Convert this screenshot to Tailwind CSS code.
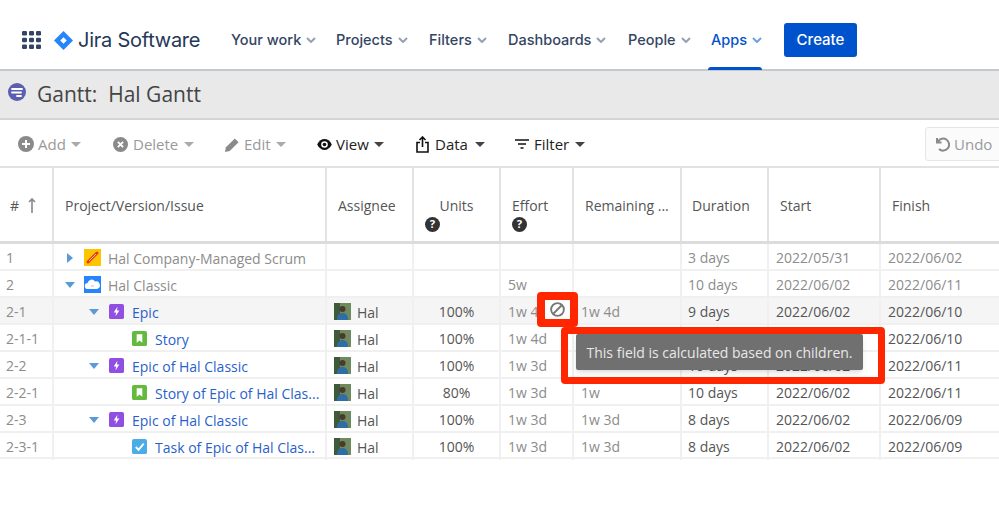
<!DOCTYPE html>
<html lang="en">

<head>
    <meta charset="UTF-8">
    <title>Gantt: Hal Gantt</title>
    <script src="https://cdn.jsdelivr.net/npm/@tailwindcss/browser@4"></script>
</head>

<body class="bg-white overflow-hidden font-['Open_Sans',sans-serif]">
    <div class="relative w-[999px] h-[517px] overflow-hidden">
        <!-- top nav -->
        <nav class="h-[71px] pt-[11px] border-b-2 border-[#c4c8cf] flex items-center font-['Inter',sans-serif] text-[#344563] text-[14.5px] font-medium">
            <svg class="ml-[22px] w-[19px] h-[18px]" viewBox="0 0 19 18" fill="#344563">
                <rect x="0" y="0" width="5" height="4.5" rx="1.2" /><rect x="7" y="0" width="5" height="4.5" rx="1.2" /><rect x="14" y="0" width="5" height="4.5" rx="1.2" />
                <rect x="0" y="6.7" width="5" height="4.5" rx="1.2" /><rect x="7" y="6.7" width="5" height="4.5" rx="1.2" /><rect x="14" y="6.7" width="5" height="4.5" rx="1.2" />
                <rect x="0" y="13.4" width="5" height="4.5" rx="1.2" /><rect x="7" y="13.4" width="5" height="4.5" rx="1.2" /><rect x="14" y="13.4" width="5" height="4.5" rx="1.2" />
            </svg>
            <svg class="ml-[13px] w-[19px] h-[19px]" viewBox="0 0 20 20">
                <path d="M10 0 20 10 10 20 0 10Z" fill="#2684ff" />
                <path d="M10 6.6 13.4 10 10 13.4 6.6 10Z" fill="#fff" />
            </svg>
            <span class="ml-[5px] w-[146px] text-[20px] font-normal tracking-[-0.25px] text-[#253858] whitespace-nowrap">Jira Software</span>
            <div class="ml-[7px] flex items-center w-[105px] gap-[5px]">Your work
                <svg class="w-[10px] h-[6px]" viewBox="0 0 10 6" fill="none" stroke="#97a0af" stroke-width="2"><path d="M1 1l4 4 4-4" /></svg>
            </div>
            <div class="flex items-center w-[93px] gap-[5px]">Projects
                <svg class="w-[10px] h-[6px]" viewBox="0 0 10 6" fill="none" stroke="#97a0af" stroke-width="2"><path d="M1 1l4 4 4-4" /></svg>
            </div>
            <div class="flex items-center w-[79px] gap-[5px]">Filters
                <svg class="w-[10px] h-[6px]" viewBox="0 0 10 6" fill="none" stroke="#97a0af" stroke-width="2"><path d="M1 1l4 4 4-4" /></svg>
            </div>
            <div class="flex items-center w-[120px] gap-[5px]">Dashboards
                <svg class="w-[10px] h-[6px]" viewBox="0 0 10 6" fill="none" stroke="#97a0af" stroke-width="2"><path d="M1 1l4 4 4-4" /></svg>
            </div>
            <div class="flex items-center w-[83px] gap-[5px]">People
                <svg class="w-[10px] h-[6px]" viewBox="0 0 10 6" fill="none" stroke="#97a0af" stroke-width="2"><path d="M1 1l4 4 4-4" /></svg>
            </div>
            <div class="relative flex items-center w-[73px] gap-[5px] text-[#0052cc]">Apps
                <svg class="w-[10px] h-[6px]" viewBox="0 0 10 6" fill="none" stroke="#6f9fe6" stroke-width="2"><path d="M1 1l4 4 4-4" /></svg>
                <span class="absolute left-[-3px] top-[38px] w-[54px] h-[3px] rounded-t-sm bg-[#0052cc]"></span>
            </div>
            <button class="w-[73px] h-[34px] rounded-[3px] bg-[#0052cc] text-white text-[15px] font-medium">Create</button>
        </nav>

        <!-- title bar -->
        <div class="h-[49px] pt-[1px] bg-[#e9e9e9] border-b-2 border-[#d4d4d4] flex items-center">
            <svg class="ml-[8px] mb-[6px] w-[18px] h-[18px]" viewBox="0 0 18 18">
                <circle cx="9" cy="9" r="9" fill="#5a5fb0" />
                <path d="M4 6h10M4 9.500h9M9 13h4" stroke="#fff" stroke-width="1.800" stroke-linecap="round" fill="none" />
            </svg>
            <span class="ml-[11px] text-[21px] text-[#444] whitespace-pre">Gantt:  Hal Gantt</span>
        </div>

        <!-- toolbar -->
        <div class="h-[48px] pt-[2px] border-b-2 border-[#e2e2e2] flex items-center text-[15px] text-[#9a9a9a] *:shrink-0">
            <div class="ml-[18px] w-[95px] flex items-center gap-[4px]">
                <svg class="w-[16px] h-[16px]" viewBox="0 0 16 16"><circle cx="8" cy="8" r="8" fill="#8a8a8a" /><path d="M8 4v8M4 8h8" stroke="#fff" stroke-width="2" /></svg>Add
                <span class="ml-[1px] border-x-[5px] border-x-transparent border-t-[5px] border-t-[#aaa]"></span>
            </div>
            <div class="w-[112px] flex items-center gap-[5px]">
                <svg class="w-[15px] h-[15px]" viewBox="0 0 16 16"><circle cx="8" cy="8" r="8" fill="#8a8a8a" /><path d="M5.200 5.200l5.600 5.600M10.800 5.200l-5.600 5.600" stroke="#fff" stroke-width="2" /></svg>Delete
                <span class="ml-[1px] border-x-[5px] border-x-transparent border-t-[5px] border-t-[#aaa]"></span>
            </div>
            <div class="w-[92px] flex items-center gap-[4px]">
                <svg class="w-[15px] h-[15px]" viewBox="0 0 16 16" fill="#8a8a8a"><path d="M0 16l1-5L10.500 1.500l4 4L5 15z" /></svg>Edit
                <span class="ml-[1px] border-x-[5px] border-x-transparent border-t-[5px] border-t-[#aaa]"></span>
            </div>
            <div class="w-[99px] flex items-center gap-[4px] text-[#222]">
                <svg class="w-[15px] h-[11px]" viewBox="0 0 16 12"><path d="M0 6c2-4 5-6 8-6s6 2 8 6c-2 4-5 6-8 6S2 10 0 6z" fill="#111" /><circle cx="8" cy="6" r="3.600" fill="#fff" /><circle cx="8" cy="6" r="2" fill="#111" /></svg>View
                <span class="ml-[1px] border-x-[5px] border-x-transparent border-t-[5px] border-t-[#444]"></span>
            </div>
            <div class="w-[99px] flex items-center gap-[6px] text-[#222]">
                <svg class="w-[13px] h-[17px]" viewBox="0 0 13 17" fill="none" stroke="#111" stroke-width="1.600"><path d="M4 6.500H1v9.500h11V6.500H9M6.500 11V1M3.500 4l3-3 3 3" /></svg>Data
                <span class="ml-[1px] border-x-[5px] border-x-transparent border-t-[5px] border-t-[#444]"></span>
            </div>
            <div class="w-[410px] flex items-center gap-[5px] text-[#222]">
                <svg class="w-[14px] h-[10px]" viewBox="0 0 14 10" fill="none" stroke="#111" stroke-width="1.500"><path d="M0 1h14M3 5h8M5.500 9h3" /></svg>Filter
                <span class="ml-[1px] border-x-[5px] border-x-transparent border-t-[5px] border-t-[#444]"></span>
            </div>
            <div class="w-[90px] h-[34px] border border-[#e6e6e6] rounded-[3px] bg-[#fbfbfb] flex items-center pl-[9px] gap-[3px]">
                <svg class="w-[16px] h-[15px]" viewBox="0 0 16 15" fill="none" stroke="#8a8a8a" stroke-width="2"><path d="M3 4.500A6 6 0 1 1 4 12M2 1v4.500h4.500" /></svg>Undo
            </div>
        </div>

        <!-- table header -->
        <div class="h-[76px] border-b-[3px] border-[#dcdcdc] grid grid-cols-[54px_273px_87px_87px_73px_108px_87px_112px_118px] text-[14px] text-[#555] *:border-r-2 *:border-[#e2e2e2] *:flex *:flex-col *:justify-center">
            <div class="pl-[10px] pt-[2px]"><span class="flex items-center gap-[9px]"># <svg class="w-[8px] h-[15px]" viewBox="0 0 8 15" fill="none" stroke="#888" stroke-width="1.600"><path d="M4 15V1M1 4l3-3 3 3" /></svg></span></div>
            <div class="pl-[11px] pt-[2px]">Project/Version/Issue</div>
            <div class="pl-[11px] pt-[2px]">Assignee</div>
            <div class="pl-[11px]"><span class="-ml-[11px] text-center mt-[17px]">Units</span>
                <svg class="mt-[1px] w-[15px] h-[15px]" viewBox="0 0 16 16"><circle cx="8" cy="8" r="8" fill="#333" /><text x="8" y="12.200" text-anchor="middle" font-size="12" font-weight="700" fill="#fff" font-family="Open Sans">?</text></svg>
            </div>
            <div class="pl-[11px]"><span class="mt-[17px]">Effort</span>
                <svg class="mt-[1px] w-[15px] h-[15px]" viewBox="0 0 16 16"><circle cx="8" cy="8" r="8" fill="#333" /><text x="8" y="12.200" text-anchor="middle" font-size="12" font-weight="700" fill="#fff" font-family="Open Sans">?</text></svg>
            </div>
            <div class="pl-[11px] pt-[2px] whitespace-nowrap">Remaining ...</div>
            <div class="pl-[10px] pt-[2px]">Duration</div>
            <div class="pl-[11px] pt-[2px]">Start</div>
            <div class="pl-[11px] pt-[2px] border-r-0!">Finish</div>
        </div>

        <!-- rows -->
        <div class="text-[14px] text-[#8c8c8c] *:h-[27px] *:border-b-2 *:border-[#f0f0f0] *:grid *:grid-cols-[54px_273px_87px_87px_73px_108px_87px_112px_118px] *:items-stretch">
            <div>
                <div class="pl-[6px] border-r-2 border-[#f0f0f0] leading-[27px]">1</div>
                <div class="flex items-center border-r-2 border-[#f0f0f0]">
                    <span class="ml-[13px] border-y-[5px] border-y-transparent border-l-[6px] border-l-[#5b9bd5]"></span>
                    <svg class="ml-[11px] w-[17px] h-[17px]" viewBox="0 0 17 17"><rect width="17" height="17" fill="#ffc400" /><path d="M4 13L13 4" stroke="#e5391c" stroke-width="3" stroke-linecap="round" /><path d="M5 12l7-7" stroke="#ffd9cf" stroke-width=".8" /></svg>
                    <span class="ml-[7px] mt-[1px] whitespace-nowrap">Hal Company-Managed Scrum</span>
                </div>
                <div class="border-r-2 border-[#f0f0f0]"></div>
                <div class="border-r-2 border-[#f0f0f0]"></div>
                <div class="border-r-2 border-[#f0f0f0]"></div>
                <div class="border-r-2 border-[#f0f0f0]"></div>
                <div class="pl-[6px] border-r-2 border-[#f0f0f0] leading-[27px]">3 days</div>
                <div class="pl-[7px] border-r-2 border-[#f0f0f0] leading-[27px]">2022/05/31</div>
                <div class="pl-[7px] leading-[27px]">2022/06/02</div>
            </div>
            <div>
                <div class="pl-[6px] border-r-2 border-[#f0f0f0] leading-[27px]">2</div>
                <div class="flex items-center border-r-2 border-[#f0f0f0]">
                    <span class="ml-[11px] border-x-[5px] border-x-transparent border-t-[6px] border-t-[#5b9bd5]"></span>
                    <svg class="ml-[9px] w-[17px] h-[17px]" viewBox="0 0 17 17"><rect width="17" height="17" fill="#2684ff" /><path d="M4 13a3 3 0 0 1-.4-6A4 4 0 0 1 11 5.500a3.800 3.800 0 0 1 2 7.500z" fill="#fff" /><path d="M7 9.500c.8 1 2.200 1 3 0" stroke="#e88" stroke-width=".8" fill="none" /></svg>
                    <span class="ml-[7px] mt-[1px] whitespace-nowrap">Hal Classic</span>
                </div>
                <div class="border-r-2 border-[#f0f0f0]"></div>
                <div class="border-r-2 border-[#f0f0f0]"></div>
                <div class="pl-[7px] border-r-2 border-[#f0f0f0] leading-[27px]">5w</div>
                <div class="border-r-2 border-[#f0f0f0]"></div>
                <div class="pl-[6px] border-r-2 border-[#f0f0f0] leading-[27px]">10 days</div>
                <div class="pl-[7px] border-r-2 border-[#f0f0f0] leading-[27px]">2022/06/02</div>
                <div class="pl-[7px] leading-[27px]">2022/06/11</div>
            </div>
            <div class="bg-[#f5f5f5]">
                <div class="pl-[6px] border-r-2 border-[#f0f0f0] leading-[27px]">2-1</div>
                <div class="flex items-center border-r-2 border-[#f0f0f0]">
                    <span class="ml-[35px] border-x-[5px] border-x-transparent border-t-[6px] border-t-[#5b9bd5]"></span>
                    <svg class="ml-[10px] w-[15px] h-[15px]" viewBox="0 0 16 16"><rect width="16" height="16" rx="2" fill="#904ee2" /><path d="M9 3L5 9h2.500L7 13l4-6H8.500z" fill="#fff" /></svg>
                    <span class="ml-[8px] mt-[1px] text-[#2a5fcb] whitespace-nowrap">Epic</span>
                </div>
                <div class="flex items-center pl-[7px] gap-[6px] border-r-2 border-[#f0f0f0] text-[#555]">
                    <svg class="w-[17px] h-[17px]" viewBox="0 0 17 17"><rect width="17" height="17" fill="#6f8a5e" /><rect width="6" height="17" fill="#3f5a3a" /><circle cx="8.500" cy="6" r="3" fill="#4a3a2c" /><path d="M3 17c0-5 2-7 5.500-7s5.500 2 5.500 7z" fill="#2f6ea5" /></svg><span class="mt-[1px]">Hal</span>
                </div>
                <div class="text-center border-r-2 border-[#f0f0f0] leading-[27px] text-[#555]">100%</div>
                <div class="pl-[7px] border-r-2 border-[#f0f0f0] leading-[27px]">1w 4d</div>
                <div class="pl-[7px] border-r-2 border-[#f0f0f0] leading-[27px]">1w 4d</div>
                <div class="pl-[6px] border-r-2 border-[#f0f0f0] leading-[27px] text-[#555]">9 days</div>
                <div class="pl-[7px] border-r-2 border-[#f0f0f0] leading-[27px] text-[#555]">2022/06/02</div>
                <div class="pl-[7px] leading-[27px] text-[#555]">2022/06/10</div>
            </div>
            <div>
                <div class="pl-[6px] border-r-2 border-[#f0f0f0] leading-[27px]">2-1-1</div>
                <div class="flex items-center border-r-2 border-[#f0f0f0]">
                    <svg class="ml-[78px] w-[15px] h-[15px]" viewBox="0 0 16 16"><rect width="16" height="16" rx="2" fill="#63ba3c" /><path d="M5 3.500h6v9l-3-2.500-3 2.500z" fill="#fff" /></svg>
                    <span class="ml-[8px] mt-[1px] text-[#2a5fcb] whitespace-nowrap">Story</span>
                </div>
                <div class="flex items-center pl-[7px] gap-[6px] border-r-2 border-[#f0f0f0] text-[#555]">
                    <svg class="w-[17px] h-[17px]" viewBox="0 0 17 17"><rect width="17" height="17" fill="#6f8a5e" /><rect width="6" height="17" fill="#3f5a3a" /><circle cx="8.500" cy="6" r="3" fill="#4a3a2c" /><path d="M3 17c0-5 2-7 5.500-7s5.500 2 5.500 7z" fill="#2f6ea5" /></svg><span class="mt-[1px]">Hal</span>
                </div>
                <div class="text-center border-r-2 border-[#f0f0f0] leading-[27px] text-[#555]">100%</div>
                <div class="pl-[7px] border-r-2 border-[#f0f0f0] leading-[27px]">1w 4d</div>
                <div class="border-r-2 border-[#f0f0f0]"></div>
                <div class="border-r-2 border-[#f0f0f0]"></div>
                <div class="border-r-2 border-[#f0f0f0]"></div>
                <div class="pl-[7px] leading-[27px] text-[#555]">2022/06/10</div>
            </div>
            <div>
                <div class="pl-[6px] border-r-2 border-[#f0f0f0] leading-[27px]">2-2</div>
                <div class="flex items-center border-r-2 border-[#f0f0f0]">
                    <span class="ml-[35px] border-x-[5px] border-x-transparent border-t-[6px] border-t-[#5b9bd5]"></span>
                    <svg class="ml-[10px] w-[15px] h-[15px]" viewBox="0 0 16 16"><rect width="16" height="16" rx="2" fill="#904ee2" /><path d="M9 3L5 9h2.500L7 13l4-6H8.500z" fill="#fff" /></svg>
                    <span class="ml-[8px] mt-[1px] text-[#2a5fcb] whitespace-nowrap">Epic of Hal Classic</span>
                </div>
                <div class="flex items-center pl-[7px] gap-[6px] border-r-2 border-[#f0f0f0] text-[#555]">
                    <svg class="w-[17px] h-[17px]" viewBox="0 0 17 17"><rect width="17" height="17" fill="#6f8a5e" /><rect width="6" height="17" fill="#3f5a3a" /><circle cx="8.500" cy="6" r="3" fill="#4a3a2c" /><path d="M3 17c0-5 2-7 5.500-7s5.500 2 5.500 7z" fill="#2f6ea5" /></svg><span class="mt-[1px]">Hal</span>
                </div>
                <div class="text-center border-r-2 border-[#f0f0f0] leading-[27px] text-[#555]">100%</div>
                <div class="pl-[7px] border-r-2 border-[#f0f0f0] leading-[27px]">1w 3d</div>
                <div class="border-r-2 border-[#f0f0f0]"></div>
                <div class="pl-[6px] border-r-2 border-[#f0f0f0] leading-[27px] text-[#555]">10 days</div>
                <div class="pl-[7px] border-r-2 border-[#f0f0f0] leading-[27px] text-[#555]">2022/06/02</div>
                <div class="pl-[7px] leading-[27px] text-[#555]">2022/06/11</div>
            </div>
            <div>
                <div class="pl-[6px] border-r-2 border-[#f0f0f0] leading-[27px]">2-2-1</div>
                <div class="flex items-center border-r-2 border-[#f0f0f0]">
                    <svg class="ml-[78px] w-[15px] h-[15px]" viewBox="0 0 16 16"><rect width="16" height="16" rx="2" fill="#63ba3c" /><path d="M5 3.500h6v9l-3-2.500-3 2.500z" fill="#fff" /></svg>
                    <span class="ml-[8px] mt-[1px] text-[#2a5fcb] whitespace-nowrap">Story of Epic of Hal Clas...</span>
                </div>
                <div class="flex items-center pl-[7px] gap-[6px] border-r-2 border-[#f0f0f0] text-[#555]">
                    <svg class="w-[17px] h-[17px]" viewBox="0 0 17 17"><rect width="17" height="17" fill="#6f8a5e" /><rect width="6" height="17" fill="#3f5a3a" /><circle cx="8.500" cy="6" r="3" fill="#4a3a2c" /><path d="M3 17c0-5 2-7 5.500-7s5.500 2 5.500 7z" fill="#2f6ea5" /></svg><span class="mt-[1px]">Hal</span>
                </div>
                <div class="text-center border-r-2 border-[#f0f0f0] leading-[27px] text-[#555]">80%</div>
                <div class="pl-[7px] border-r-2 border-[#f0f0f0] leading-[27px]">1w 3d</div>
                <div class="pl-[7px] border-r-2 border-[#f0f0f0] leading-[27px]">1w</div>
                <div class="pl-[6px] border-r-2 border-[#f0f0f0] leading-[27px] text-[#555]">10 days</div>
                <div class="pl-[7px] border-r-2 border-[#f0f0f0] leading-[27px] text-[#555]">2022/06/02</div>
                <div class="pl-[7px] leading-[27px] text-[#555]">2022/06/11</div>
            </div>
            <div>
                <div class="pl-[6px] border-r-2 border-[#f0f0f0] leading-[27px]">2-3</div>
                <div class="flex items-center border-r-2 border-[#f0f0f0]">
                    <span class="ml-[35px] border-x-[5px] border-x-transparent border-t-[6px] border-t-[#5b9bd5]"></span>
                    <svg class="ml-[10px] w-[15px] h-[15px]" viewBox="0 0 16 16"><rect width="16" height="16" rx="2" fill="#904ee2" /><path d="M9 3L5 9h2.500L7 13l4-6H8.500z" fill="#fff" /></svg>
                    <span class="ml-[8px] mt-[1px] text-[#2a5fcb] whitespace-nowrap">Epic of Hal Classic</span>
                </div>
                <div class="flex items-center pl-[7px] gap-[6px] border-r-2 border-[#f0f0f0] text-[#555]">
                    <svg class="w-[17px] h-[17px]" viewBox="0 0 17 17"><rect width="17" height="17" fill="#6f8a5e" /><rect width="6" height="17" fill="#3f5a3a" /><circle cx="8.500" cy="6" r="3" fill="#4a3a2c" /><path d="M3 17c0-5 2-7 5.500-7s5.500 2 5.500 7z" fill="#2f6ea5" /></svg><span class="mt-[1px]">Hal</span>
                </div>
                <div class="text-center border-r-2 border-[#f0f0f0] leading-[27px] text-[#555]">100%</div>
                <div class="pl-[7px] border-r-2 border-[#f0f0f0] leading-[27px]">1w 3d</div>
                <div class="pl-[7px] border-r-2 border-[#f0f0f0] leading-[27px]">1w 3d</div>
                <div class="pl-[6px] border-r-2 border-[#f0f0f0] leading-[27px] text-[#555]">8 days</div>
                <div class="pl-[7px] border-r-2 border-[#f0f0f0] leading-[27px] text-[#555]">2022/06/02</div>
                <div class="pl-[7px] leading-[27px] text-[#555]">2022/06/09</div>
            </div>
            <div class="h-[26px]!">
                <div class="pl-[6px] border-r-2 border-[#f0f0f0] leading-[27px]">2-3-1</div>
                <div class="flex items-center border-r-2 border-[#f0f0f0]">
                    <svg class="ml-[78px] w-[15px] h-[15px]" viewBox="0 0 16 16"><rect width="16" height="16" rx="2" fill="#4bade8" /><path d="M4 8.500l3 3 5.500-6.500" fill="none" stroke="#fff" stroke-width="2" /></svg>
                    <span class="ml-[8px] mt-[1px] text-[#2a5fcb] whitespace-nowrap">Task of Epic of Hal Clas...</span>
                </div>
                <div class="flex items-center pl-[7px] gap-[6px] border-r-2 border-[#f0f0f0] text-[#555]">
                    <svg class="w-[17px] h-[17px]" viewBox="0 0 17 17"><rect width="17" height="17" fill="#6f8a5e" /><rect width="6" height="17" fill="#3f5a3a" /><circle cx="8.500" cy="6" r="3" fill="#4a3a2c" /><path d="M3 17c0-5 2-7 5.500-7s5.500 2 5.500 7z" fill="#2f6ea5" /></svg><span class="mt-[1px]">Hal</span>
                </div>
                <div class="text-center border-r-2 border-[#f0f0f0] leading-[27px] text-[#555]">100%</div>
                <div class="pl-[7px] border-r-2 border-[#f0f0f0] leading-[27px]">1w 3d</div>
                <div class="pl-[7px] border-r-2 border-[#f0f0f0] leading-[27px]">1w 3d</div>
                <div class="pl-[6px] border-r-2 border-[#f0f0f0] leading-[27px] text-[#555]">8 days</div>
                <div class="pl-[7px] border-r-2 border-[#f0f0f0] leading-[27px] text-[#555]">2022/06/02</div>
                <div class="pl-[7px] leading-[27px] text-[#555]">2022/06/09</div>
            </div>
        </div>

        <!-- overlays: blocked-cell icon, tooltip, red annotations -->
        <div class="absolute left-[537px] top-[292px] w-[41px] h-[35px] rounded-[4px] border-[8px] border-[#ff2600] bg-white flex items-center justify-center">
            <svg class="w-[15px] h-[15px]" viewBox="0 0 16 16" fill="none" stroke="#777" stroke-width="2"><circle cx="8" cy="8" r="6.800" /><path d="M3.500 12.500l9-9" /></svg>
        </div>
        <div class="absolute left-[576px] top-[334px] w-[287px] h-[36px] rounded-[2px] bg-[#707070] text-[#e8e8e8] text-[14px] flex items-center justify-center shadow-md whitespace-nowrap">This field is calculated based on children.</div>
        <div class="absolute left-[561px] top-[327px] w-[324px] h-[57px] rounded-[4px] border-[7px] border-[#ff2600]"></div>
    </div>
</body>

</html>
